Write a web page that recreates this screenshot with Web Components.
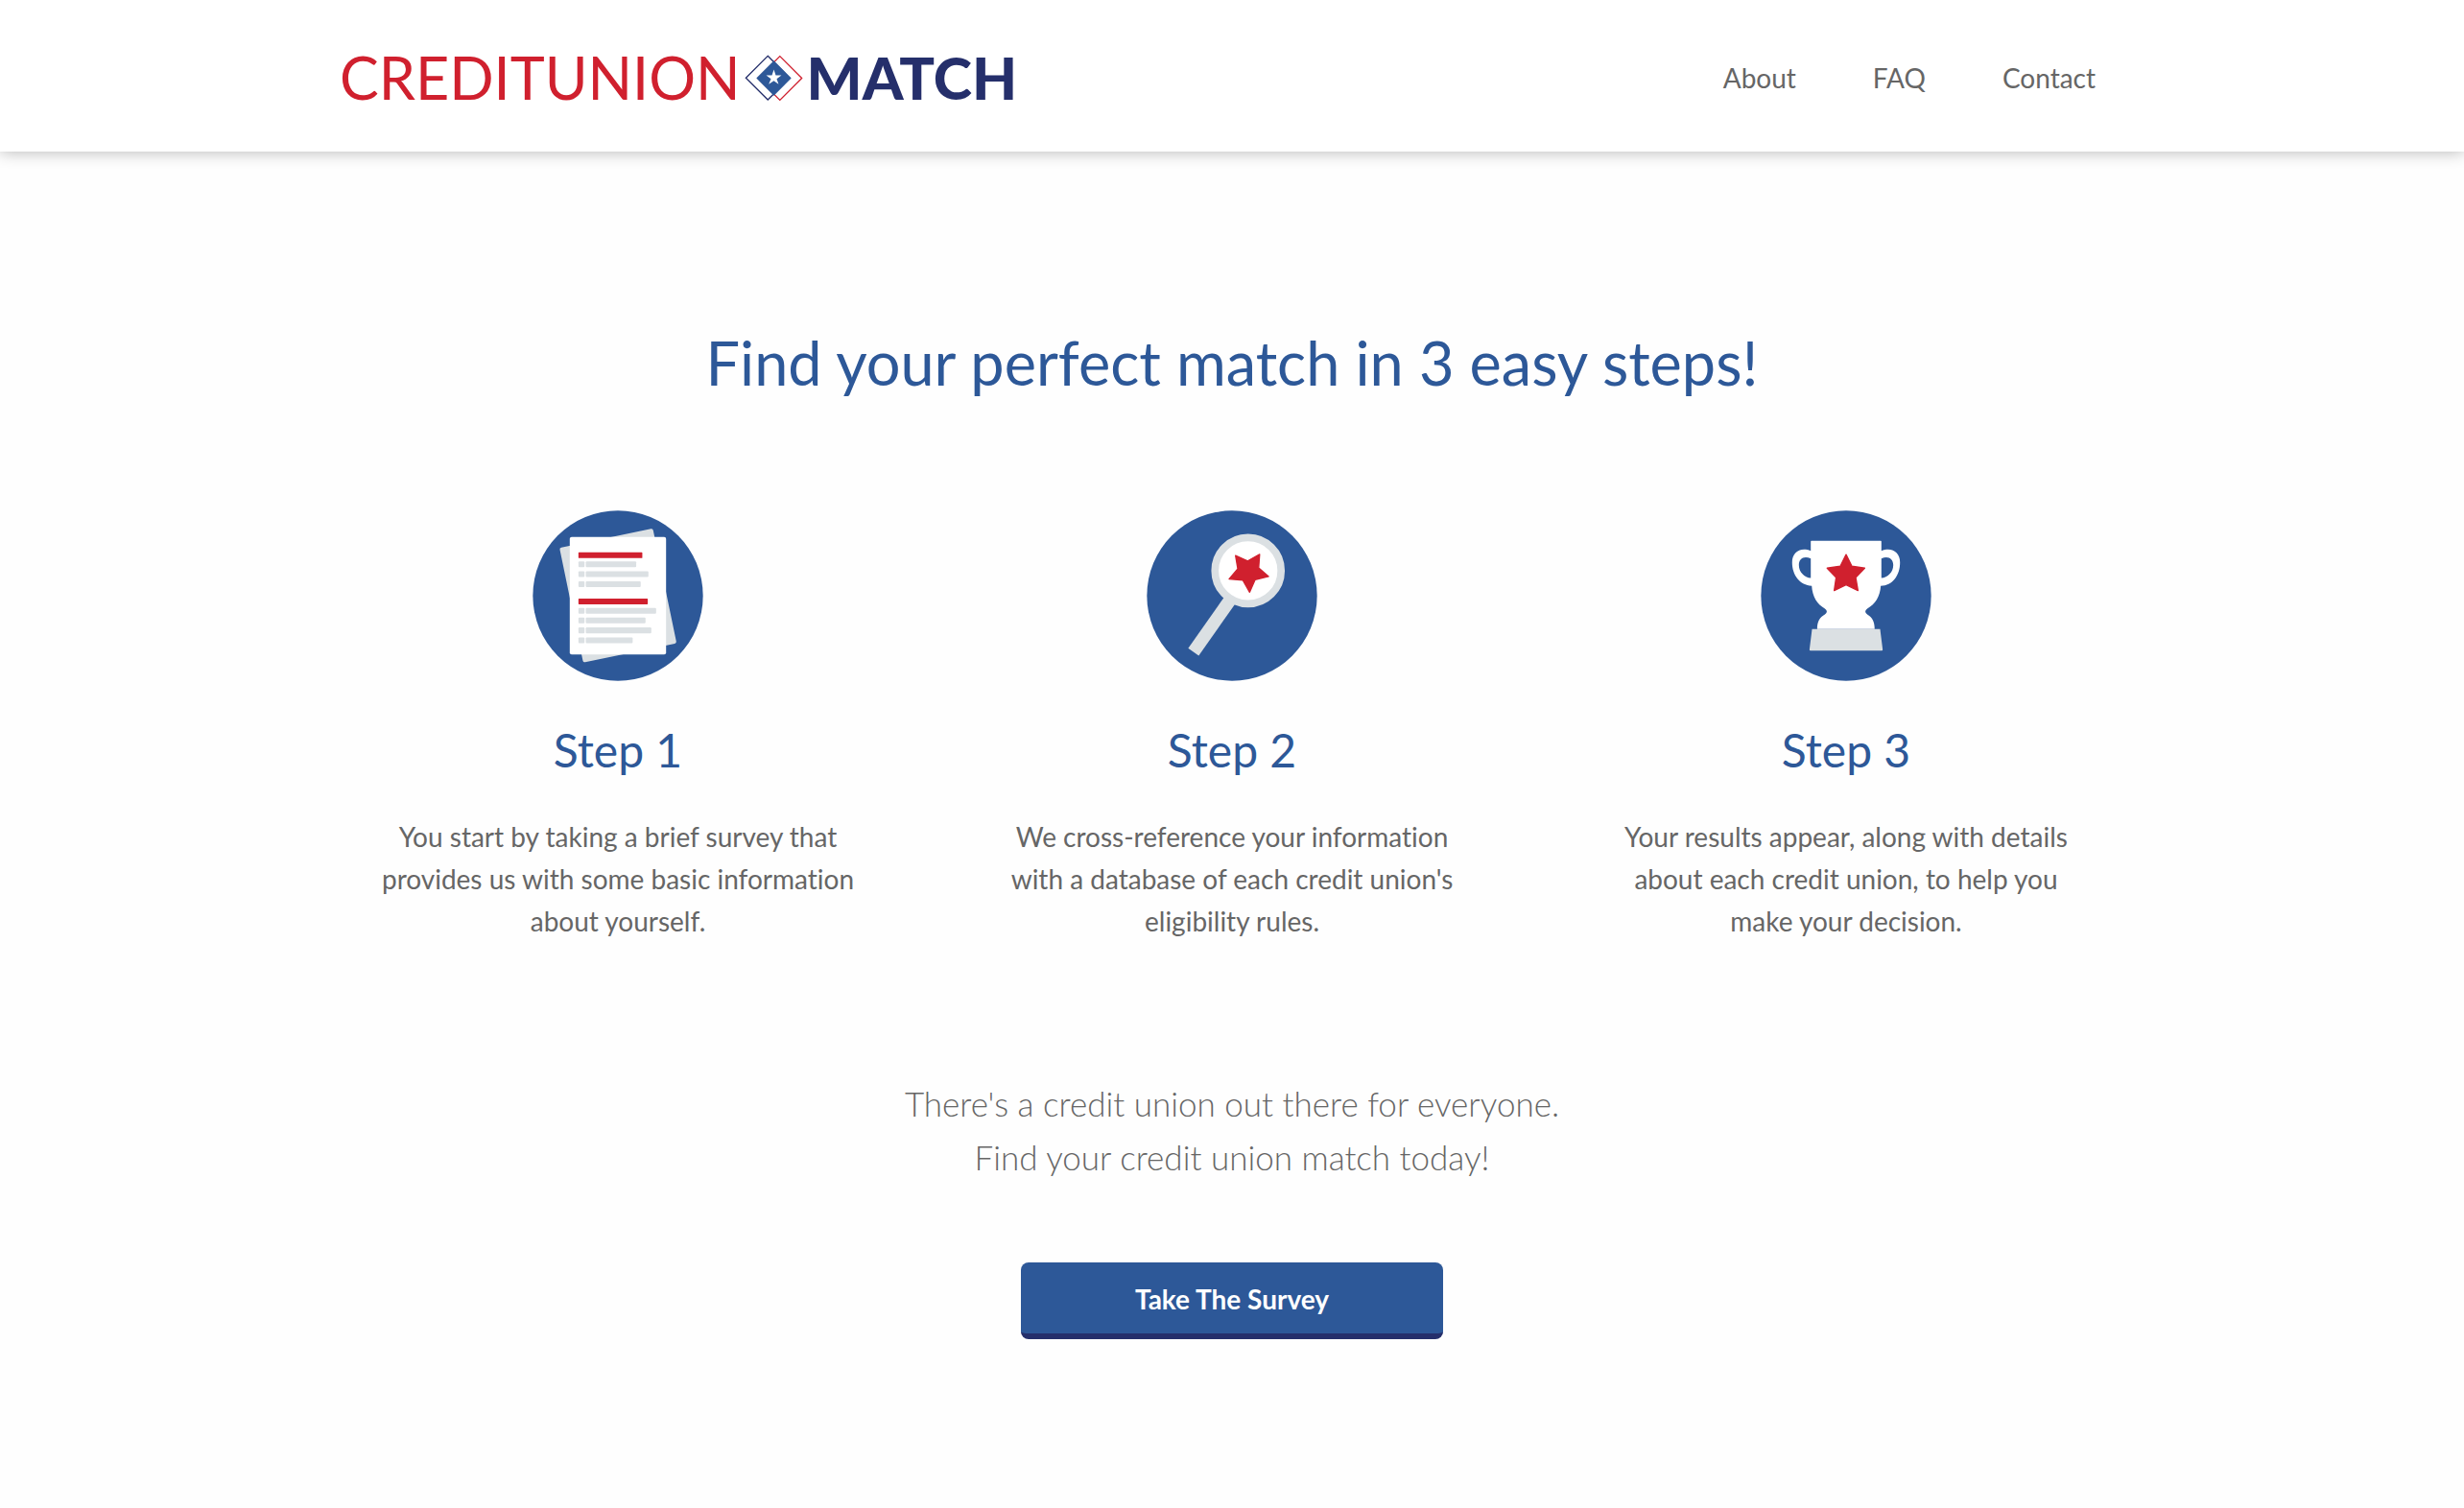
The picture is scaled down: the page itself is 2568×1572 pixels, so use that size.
<!DOCTYPE html>
<html lang="en">
<head>
<meta charset="utf-8">
<title>Credit Union Match</title>
<style>
:root{--blue:#2d5898;--navy:#252f6b;--red:#d0202e;--grey:#dbe0e3;--ink:#666}
body{margin:0;background:#fefefe;color:var(--ink);font:400 28px/44px Lato,"Liberation Sans",sans-serif;font-variant-ligatures:none}
</style>
</head>
<body>
<cum-header></cum-header>
<main>
<cum-steps heading="Find your perfect match in 3 easy steps!">
<cum-step heading="Step 1" icon="survey">You start by taking a brief survey that provides us with some basic information about yourself.</cum-step>
<cum-step heading="Step 2" icon="search">We cross-reference your information with a database of each credit union's eligibility rules.</cum-step>
<cum-step heading="Step 3" icon="trophy">Your results appear, along with details about each credit union, to help you make your decision.</cum-step>
</cum-steps>
<cum-callout action="Take The Survey">There's a credit union out there for everyone.<br>Find your credit union match today!</cum-callout>
</main>
<script>
const define = (name, render) => customElements.define(name, class extends HTMLElement {
  connectedCallback() {
    if (!this.shadowRoot) this.attachShadow({mode: 'open'}).innerHTML = render(this);
  }
});

const icons = {
  survey: `
    <rect x="164" y="117" width="297" height="365" rx="6" transform="rotate(-11.7 312 300)" fill="#dbe0e3"/>
    <rect x="162" y="117" width="300" height="366" rx="6" fill="#fff"/>
    <g fill="#d0202e"><rect x="189" y="165" width="199" height="18" rx="2"/><rect x="189" y="309" width="216" height="18" rx="2"/></g>
    <g fill="#dbe0e3">${[[193,157],[224,195],[255,171],[338,219],[368,186],[399,204],[430,146]].map(([y,w]) =>
      `<rect x="189" y="${y}" width="19" height="18" rx="3"/><rect x="212" y="${y}" width="${w}" height="18" rx="3"/>`).join('')}</g>`,
  search: `
    <path d="M304 316 192 475" stroke="#dbe0e3" stroke-width="40"/>
    <circle cx="362" cy="222" r="103" fill="#fff" stroke="#dbe0e3" stroke-width="23"/>
    <path d="M323 175 361 192 398 171 395 213 426 240 384 250 367 289 346 252 303 248 330 216Z" fill="#d0202e" stroke="#d0202e" stroke-width="4" stroke-linejoin="round"/>`,
  trophy: `
    <path d="M204 129H420Q422 129 422 131V160C456 147 480 166 480 196C480 236 457 269 420 269C418 303 402 326 378 340Q366 349 378 358C393 367 401 380 401 404H222C222 380 230 367 246 358Q258 349 246 340C222 326 207 303 205 269C168 267 144 236 144 196C144 166 168 147 202 160V131Q202 129 204 129Z" fill="#fff"/>
    <path d="M202 184C180 174 165 185 165 204C165 226 182 243 202 245ZM422 184C443 174 459 185 459 204C459 226 442 243 422 245Z" fill="#2d5898"/>
    <path d="M206 404H418L426 468Q426 471 423 471H201Q198 471 198 468Z" fill="#dbe0e3"/>
    <path d="M312 172 330 208 370 214 342 243 349 284 312 266 275 284 281 243 253 214 294 208Z" fill="#d0202e" stroke="#d0202e" stroke-width="4" stroke-linejoin="round"/>`
};

define('cum-logo', () => `
  <style>
    :host{display:block}
    a{display:flex;align-items:center;gap:4px;color:var(--red);font-size:61px;line-height:80px;font-weight:400;text-decoration:none}
    strong{color:var(--navy);font-weight:900}
    svg{display:block;width:61px;height:49px}
  </style>
  <a href="#" aria-label="Credit Union Match home"><span>CREDITUNION</span>
  <svg viewBox="222 54 184 148" aria-hidden="true">
    <g fill="none" stroke-width="4"><path d="M333 59 402 128 333 197 264 128Z" stroke="#d0202e"/><path d="M295 58 364 127 295 196 226 127Z" stroke="#252f6b"/></g>
    <path d="M314 73 369 128 314 183 259 128Z" fill="#2d5898"/>
    <path d="M314 101 320 119 338 119 323 130 329 147 314 136 298 147 305 130 290 119 308 119Z" fill="#fff"/>
  </svg><strong>MATCH</strong></a>`);

define('cum-header', () => `
  <style>
    :host{display:block;background:#fff;box-shadow:0 0 16px rgba(0,0,0,.3)}
    header{box-sizing:border-box;max-width:1920px;margin:0 auto;padding:41px 20px 37px 30px;display:flex;align-items:center;justify-content:space-between}
    nav{display:flex}
    nav a{padding:0 40px;color:inherit;text-decoration:none}
  </style>
  <header><cum-logo></cum-logo><nav aria-label="Main"><a href="#about">About</a><a href="#faq">FAQ</a><a href="#contact">Contact</a></nav></header>`);

define('cum-steps', el => `
  <style>
    :host{display:block;max-width:1920px;margin:0 auto;padding-top:172px;text-align:center}
    h1{margin:0 0 106px;color:var(--blue);font-size:63px;line-height:96px;font-weight:400}
    div{display:grid;grid-template-columns:repeat(3,1fr)}
  </style>
  <h1>${el.getAttribute('heading')}</h1><div><slot></slot></div>`);

define('cum-step', el => `
  <style>
    :host{display:block;padding:0 60px}
    svg{display:block;width:178px;height:178px;margin:0 auto}
    h2{margin:36px 0 32px;color:var(--blue);font-size:48px;line-height:72px;font-weight:400}
    p{max-width:500px;margin:0 auto}
  </style>
  <svg viewBox="46 34 532 532" aria-hidden="true"><circle cx="312" cy="300" r="265" fill="#2d5898"/>${icons[el.getAttribute('icon')]}</svg>
  <h2>${el.getAttribute('heading')}</h2><p><slot></slot></p>`);

define('cum-callout', el => `
  <style>
    :host{display:flex;flex-direction:column;align-items:center;padding:140px 30px;text-align:center}
    p{margin:0 0 82px;font-size:35px;line-height:56px;font-weight:300}
    button{width:440px;height:80px;padding:2px 0 0;border:0;border-bottom:6px solid var(--navy);border-radius:8px;background:var(--blue);color:#fff;font:700 28px/44px Lato,"Liberation Sans",sans-serif}
  </style>
  <p><slot></slot></p><button type="button">${el.getAttribute('action')}</button>`);
</script>
</body>
</html>
